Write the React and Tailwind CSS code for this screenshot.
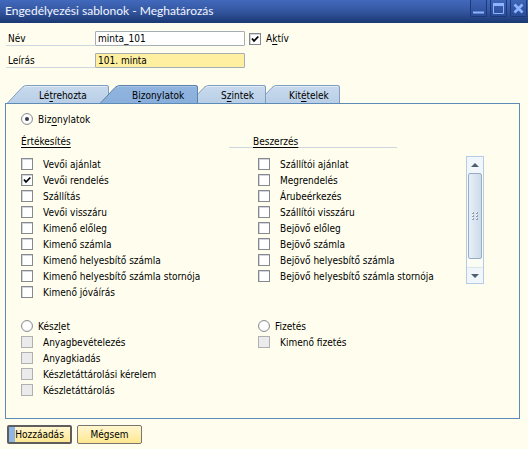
import React from 'react';

const salesDocs = [
  ['Vevői ajánlat', false],
  ['Vevői rendelés', true],
  ['Szállítás', false],
  ['Vevői visszáru', false],
  ['Kimenő előleg', false],
  ['Kimenő számla', false],
  ['Kimenő helyesbítő számla', false],
  ['Kimenő helyesbítő számla stornója', false],
  ['Kimenő jóváírás', false],
];

const purchaseDocs = [
  ['Szállítói ajánlat', false],
  ['Megrendelés', false],
  ['Árubeérkezés', false],
  ['Szállítói visszáru', false],
  ['Bejövő előleg', false],
  ['Bejövő számla', false],
  ['Bejövő helyesbítő számla', false],
  ['Bejövő helyesbítő számla stornója', false],
];

const stockDocs = ['Anyagbevételezés', 'Anyagkiadás', 'Készletáttárolási kérelem', 'Készletáttárolás'];

const tabs = [
  { text: ['Lé', 't', 'rehozta'], width: 102, size: 'w-[102px]', layer: 'z-10' },
  { text: ['B', 'i', 'zonylatok'], width: 98, size: 'w-[98px] -ml-[9px]', layer: 'z-20', active: true },
  { text: ['S', 'z', 'intek'], width: 77, size: 'w-[77px] -ml-[9px]', layer: 'z-10' },
  { text: ['Kit', 'é', 'telek'], width: 83, size: 'w-[83px] -ml-[9px]', layer: 'z-0' },
];

function Hot({ parts }) {
  return (
    <span>
      {parts[0]}
      <span className="underline underline-offset-2">{parts[1]}</span>
      {parts[2]}
    </span>
  );
}

function Box({ checked, disabled, id }) {
  return (
    <span className="relative block size-3 shrink-0">
      <input
        id={id}
        type="checkbox"
        defaultChecked={checked}
        disabled={disabled}
        className="peer block size-3 appearance-none border border-[#858990] bg-white shadow-[inset_1px_1px_0_#d3d5dc] disabled:border-[#b0b0b0] disabled:bg-[#ebebeb] disabled:shadow-none"
      />
      <svg viewBox="0 0 12 12" className="pointer-events-none absolute inset-0 hidden size-3 peer-checked:block" aria-hidden="true">
        <path d="M3 5.5 L5 8 L9.3 3.5" fill="none" stroke="#000" strokeWidth="1.8" />
      </svg>
    </span>
  );
}

function CheckRow({ label, checked, disabled }) {
  return (
    <label className="flex h-4 items-center gap-[10px] whitespace-nowrap">
      <Box checked={checked} disabled={disabled} />
      <span className="pt-0.5">{label}</span>
    </label>
  );
}

function RadioRow({ parts, checked }) {
  return (
    <label className="flex h-4 items-center gap-[5px] whitespace-nowrap">
      <span className="relative block size-3 shrink-0">
        <input
          type="radio"
          name="group"
          defaultChecked={checked}
          className="peer block size-3 appearance-none rounded-full border border-[#8d9095] bg-white shadow-[inset_0_0_1px_#b9bcc4]"
        />
        <span className="pointer-events-none absolute inset-1 hidden rounded-full bg-[#333a48] peer-checked:block" />
      </span>
      <span className="pt-0.5">
        <Hot parts={parts} />
      </span>
    </label>
  );
}

function WindowButton({ label, children }) {
  return (
    <button
      aria-label={label}
      className="flex h-[17px] w-[17px] items-center justify-center rounded-b-xs border border-t-0 border-[#1b3a7c] bg-linear-to-b from-[#3f65b6] to-[#2b4c97]"
    >
      <svg viewBox="0 0 11 11" className="size-[11px]" fill="none" stroke="#8fb4ff" aria-hidden="true">
        {children}
      </svg>
    </button>
  );
}

function Tab({ tab }) {
  const w = tab.width;
  return (
    <button
      role="tab"
      aria-selected={Boolean(tab.active)}
      className={`relative h-[18px] pl-8 text-left whitespace-nowrap ${tab.size} ${tab.layer}`}
    >
      <svg viewBox={`0 0 ${w} 18`} className="absolute inset-0 size-full" aria-hidden="true">
        <defs>
          <linearGradient id={`tab${w}`} x1="0" y1="0" x2="0" y2="1">
            <stop offset="0" stopColor={tab.active ? '#91b5df' : '#c8daed'} />
            <stop offset="1" stopColor={tab.active ? '#8aafdb' : '#b9cfe7'} />
          </linearGradient>
        </defs>
        <path
          d={`M0.5 18 L15 2.5 Q17 0.5 20 0.5 H${w - 2} Q${w - 0.5} 0.5 ${w - 0.5} 2 V18`}
          fill={`url(#tab${w})`}
          stroke={tab.active ? '#5c83ad' : '#7f9fc0'}
        />
        <path d={`M17 2.5 Q18 1.5 20 1.5 H${w - 2}`} fill="none" stroke={tab.active ? '#a9c6e7' : '#e0ebf5'} />
      </svg>
      <span className="relative block pt-[3px] leading-[15px]">
        <Hot parts={tab.text} />
      </span>
    </button>
  );
}

function Field({ id, label, value, tone, children }) {
  return (
    <div className="flex h-[15px] items-center">
      <label htmlFor={id} className="h-[15px] w-[89px] border-b border-[#ced7df] pl-0.5 leading-[15px]">
        {label}
      </label>
      <input
        id={id}
        defaultValue={value}
        className={`h-[15px] w-[150px] rounded-[1px] border border-[#a5adb5] px-0.5 outline-none ${tone}`}
      />
      {children}
    </div>
  );
}

function ScrollBar() {
  return (
    <div className="flex h-32 w-[18px] flex-col border border-[#b5cce6] bg-[#fbfcf4]">
      <button aria-label="Fel" className="flex h-4 items-center justify-center bg-[#f1f6fa]">
        <svg viewBox="0 0 8 4" className="h-1 w-2" aria-hidden="true">
          <path d="M0 4 L4 0 L8 4Z" fill="#4c5e70" />
        </svg>
      </button>
      <div className="flex-1">
        <div className="mx-px flex h-[86px] items-center justify-center rounded-xs border border-[#96abc4] bg-linear-to-r from-[#e7eff8] to-[#cedbea]">
          <svg viewBox="0 0 7 9" className="h-[9px] w-[7px]" fill="#8fa3b9" aria-hidden="true">
            <path d="M0 0h2v2H0z M4 0h2v2H4z M0 3h2v2H0z M4 3h2v2H4z M0 6h2v2H0z M4 6h2v2H4z" />
            <path d="M0 0h1v1H0z M4 0h1v1H4z M0 3h1v1H0z M4 3h1v1H4z M0 6h1v1H0z M4 6h1v1H4z" fill="#fff" />
          </svg>
        </div>
      </div>
      <button aria-label="Le" className="flex h-4 items-center justify-center border-t border-[#dce6ee] bg-[#f1f6fa]">
        <svg viewBox="0 0 8 4" className="h-1 w-2" aria-hidden="true">
          <path d="M0 0 L4 4 L8 0Z" fill="#4c5e70" />
        </svg>
      </button>
    </div>
  );
}

export default function App() {
  return (
    <div className="min-h-screen bg-[#fffeee] font-['DejaVu_Sans_Condensed','Open_Sans',sans-serif] text-[10px] leading-4 text-black">
      <header className="flex h-[23px] items-start justify-between bg-linear-to-b from-[#4269bd] via-[#34569f] to-[#1b3874] pl-[5px]">
        <h1 className="font-['Lato','Open_Sans',sans-serif] text-xs leading-[22px] whitespace-nowrap text-[#f1f5ff]">
          Engedélyezési sablonok - Meghatározás
        </h1>
        <div className="flex gap-[3px] pr-px">
          <WindowButton label="Kis méret">
            <path d="M0 9.5H11" strokeWidth="2" />
          </WindowButton>
          <WindowButton label="Teljes méret">
            <path d="M0.5 1V10.5H10.5V1" />
            <path d="M0 1.5H11" strokeWidth="3" />
          </WindowButton>
          <WindowButton label="Bezárás">
            <path d="M1.5 1.5L9.5 9.5M9.5 1.5L1.5 9.5" strokeWidth="2.6" />
          </WindowButton>
        </div>
      </header>

      <form className="flex flex-col gap-[7px] pt-2 pl-[6px]">
        <Field id="name" label="Név" value="minta_101" tone="bg-white">
          <label className="ml-1 flex items-center gap-[5px]">
            <Box checked />
            <Hot parts={['A', 'k', 'tív']} />
          </label>
        </Field>
        <Field id="desc" label="Leírás" value="101. minta" tone="bg-[#ffefa0]" />
      </form>

      <main className="mt-[17px] mr-2 ml-[5px]">
        <div role="tablist" className="flex pl-0.5">
          {tabs.map((tab) => (
            <Tab key={tab.width} tab={tab} />
          ))}
        </div>
        <section className="border border-[#5c8bb8] pt-[7px] pr-[35px] pb-5 pl-[15px]">
          <RadioRow parts={['Biz', 'o', 'nylatok']} checked />
          <div className="grid grid-cols-[208px_1fr] pt-[9px] leading-[11px]">
            <h2 className="underline underline-offset-2">Értékesítés</h2>
            <h2 className="mr-[87px] border-b border-[#ced7df] pl-6 underline underline-offset-2">Beszerzés</h2>
          </div>
          <div className="grid grid-cols-[237px_1fr_auto] pt-2">
            <div>
              {salesDocs.map(([label, checked]) => (
                <CheckRow key={label} label={label} checked={checked} />
              ))}
            </div>
            <div>
              {purchaseDocs.map(([label, checked]) => (
                <CheckRow key={label} label={label} checked={checked} />
              ))}
            </div>
            <ScrollBar />
          </div>
          <div className="grid grid-cols-[237px_1fr] pt-[18px]">
            <div>
              <RadioRow parts={['Kész', 'l', 'et']} />
              {stockDocs.map((label) => (
                <CheckRow key={label} label={label} disabled />
              ))}
            </div>
            <div>
              <RadioRow parts={['Fizetés', '', '']} />
              <CheckRow label="Kimenő fizetés" disabled />
            </div>
          </div>
        </section>
      </main>

      <footer className="flex gap-[5px] pt-1.5 pl-[7px]">
        <button className="h-[19px] w-[65px] rounded-xs border-2 border-[#5f5e5c] bg-linear-to-b from-[#fff6cf] to-[#ffe78f] shadow-[inset_6px_0_0_#8fb5e6] leading-[14px]">
          Hozzáadás
        </button>
        <button className="h-[19px] w-[65px] rounded-xs border border-[#77756d] bg-linear-to-b from-[#fff6cf] to-[#ffe78f] leading-4">
          Mégsem
        </button>
      </footer>
    </div>
  );
}
